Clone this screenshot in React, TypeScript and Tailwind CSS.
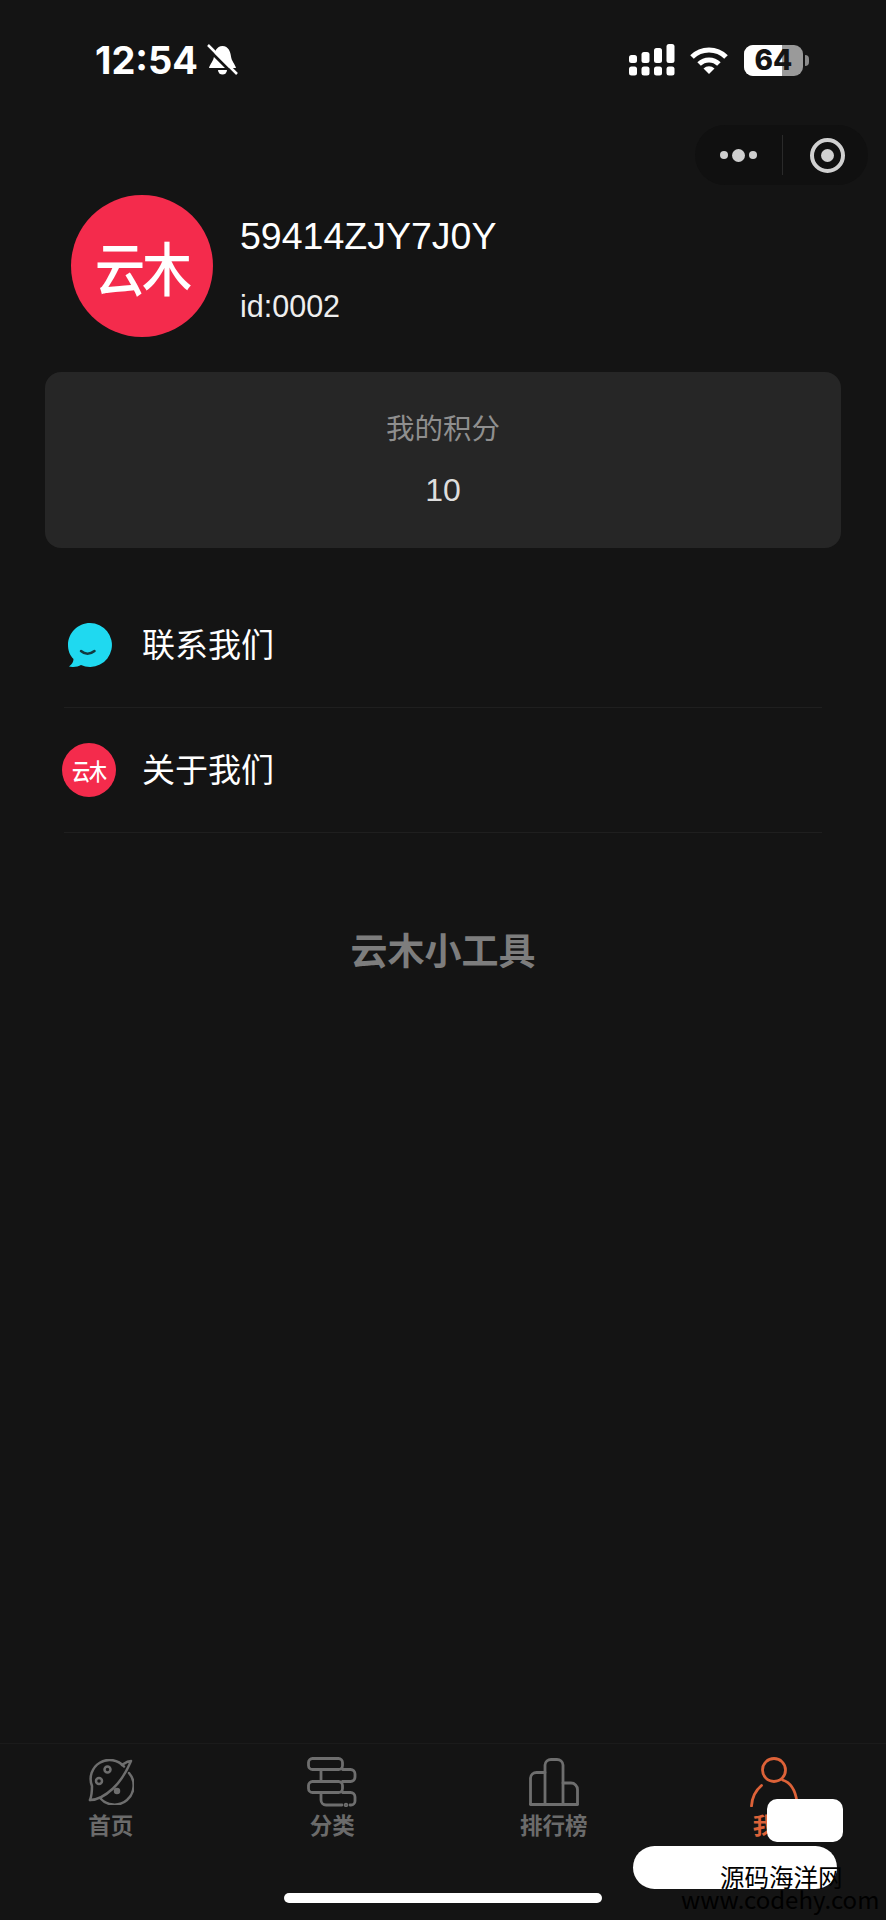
const sans = 'font-["Liberation_Sans","Noto_Sans_CJK_SC",sans-serif]';

function Signal() {
  return (
    <svg width="46" height="32" viewBox="0 0 46 32" fill="#fff">
      <rect x="0" y="11" width="8" height="8" rx="2.5" />
      <rect x="12.5" y="8" width="8" height="11" rx="2.5" />
      <rect x="25" y="4" width="8" height="15" rx="2.5" />
      <rect x="37.5" y="0" width="8" height="19" rx="2.5" />
      <rect x="0" y="22.5" width="8" height="9" rx="2.5" />
      <rect x="12.5" y="22.5" width="8" height="9" rx="2.5" />
      <rect x="25" y="22.5" width="8" height="9" rx="2.5" />
      <rect x="37.5" y="22.5" width="8" height="9" rx="2.5" />
    </svg>
  );
}

function Wifi() {
  return (
    <svg width="40" height="29" viewBox="0 0 40 29" fill="none" stroke="#fff" strokeWidth="5">
      <path d="M3 11 A24 24 0 0 1 37 11" />
      <path d="M10.1 18.1 A14 14 0 0 1 29.9 18.1" />
      <path d="M14.5 22.5 A8 8 0 0 1 25.5 22.5 L20 28 Z" fill="#fff" stroke="none" />
    </svg>
  );
}

function BellOff() {
  return (
    <svg width="31" height="32" viewBox="0 0 31 32">
      <path fill="#fff" d="M15.5 2C9.5 2 7.5 8 7 12.5 6.5 17 3 20 2 24L29 24C28 20 24.5 17 24 12.5 23.500 8 21.500 2 15.500 2Z" />
      <path fill="#fff" d="M11 26a4.500 4.500 0 0 0 9 0Z" />
      <path stroke="#141414" strokeWidth="3" d="M-1 3 27 31" />
      <path stroke="#fff" strokeWidth="2.500" d="M1 1 30 30" />
    </svg>
  );
}

function Battery() {
  return (
    <div className="flex items-center">
      <div className="relative w-[59px] h-[31px] rounded-[9px] overflow-hidden bg-[#9a9a9a]">
        <div className="w-[38px] h-full bg-white"></div>
        <div className="absolute inset-0 flex items-center justify-center text-[#141414] font-['Inter',sans-serif] font-extrabold text-[28px] leading-none">64</div>
      </div>
      <div className="w-[4px] h-[11px] ml-[2px] rounded-r-full bg-[#8a8a8a]"></div>
    </div>
  );
}

function Logo({ circle, text }: { circle: string; text: string }) {
  return (
    <div className={`flex items-center justify-center rounded-full bg-[#f42b4c] shrink-0 ${circle}`}>
      <span className={`text-white font-["Noto_Sans_CJK_SC",sans-serif] ${text}`}>云木</span>
    </div>
  );
}

function Bubble() {
  return (
    <svg width="46" height="44" viewBox="0 0 46 44">
      <path fill="#1fd9f0" d="M24 0a22 22 0 1 1-9 42.100C12 44 6 44.500 3 43.500 6 41 7.500 39 7.500 36 3.500 32 2 27 2 22 2 10 12 0 24 0Z" />
      <path fill="none" stroke="#123a40" strokeWidth="2.500" strokeLinecap="round" d="M15 28c4 3.500 9 3.500 13.500 0" />
    </svg>
  );
}

function HomeIcon() {
  return (
    <svg width="46" height="46" viewBox="0 0 46 46" fill="none" stroke="#6e6e6e" strokeWidth="2.500" strokeLinecap="round" strokeLinejoin="round">
      <path d="M36 7.500A19 19 0 0 0 4 27C4 32 4 36 2 41" />
      <path d="M41 14A19 19 0 0 1 12 39" />
      <path d="M2 41C10 41 17 37 25 29.500 33 22 38 14 43 2 39 2 37 4 34 6" />
      <circle cx="19.500" cy="10.500" r="3" />
      <circle cx="11" cy="22" r="3" />
      <circle cx="29" cy="32" r="2" fill="#6e6e6e" />
    </svg>
  );
}

function CategoryIcon() {
  return (
    <svg width="50" height="50" viewBox="0 0 50 50" fill="none" stroke="#6e6e6e" strokeWidth="2.800" strokeLinecap="round" strokeLinejoin="round">
      <rect x="1.500" y="1.500" width="34" height="11" rx="4" />
      <path d="M14 12.500V24M35.500 12.500H43.500A4.500 4.500 0 0 1 48 17V20A4.500 4.500 0 0 1 43.500 24.500H35.500" />
      <rect x="1.500" y="24.500" width="34" height="11" rx="4" />
      <path d="M14 35.500V43A5 5 0 0 0 19 48H35M35.500 35.500H43.500A4.500 4.500 0 0 1 48 40V44A4 4 0 0 1 44 48H43" />
      <circle cx="39" cy="48" r="0.800" fill="#6e6e6e" />
    </svg>
  );
}

function RankIcon() {
  return (
    <svg width="50" height="48" viewBox="0 0 50 48" fill="none" stroke="#6e6e6e" strokeWidth="2.800" strokeLinecap="round" strokeLinejoin="round">
      <path d="M1.500 46V20A6 6 0 0 1 7.500 14.500H16" />
      <path d="M16 46V7A6 6 0 0 1 22 1.500H28A6 6 0 0 1 34 7V46" />
      <path d="M34 25H42A6.500 6.500 0 0 1 48.500 31.500V46" />
      <path d="M1.500 46.500H48.500" />
    </svg>
  );
}

function MeIcon() {
  return (
    <svg width="50" height="50" viewBox="0 0 50 50" fill="none" stroke="#dd6238" strokeWidth="2.800" strokeLinecap="round">
      <circle cx="24" cy="13" r="11.500" />
      <path d="M1.500 49C2 41 5.500 33.500 11.500 28.500" />
      <path d="M32.500 23C41 25.500 45.500 34 47 45" />
    </svg>
  );
}

const tabs = [
  { label: '首页', icon: <HomeIcon /> },
  { label: '分类', icon: <CategoryIcon /> },
  { label: '排行榜', icon: <RankIcon /> },
  { label: '我的', icon: <MeIcon />, active: true },
];

const rows = [
  { label: '联系我们', icon: <Bubble /> },
  {
    label: '关于我们',
    icon: <Logo circle="w-[54px] h-[54px]" text="text-[18px] font-medium tracking-[-1px] leading-none scale-y-125" />,
  },
];

export default function App() {
  return (
    <div className={`relative h-[1920px] w-full overflow-hidden flex flex-col bg-[#141414] ${sans}`}>
      {/* status bar */}
      <div className="h-[125px] shrink-0 pt-[44px] pl-[95px] pr-[77px] flex items-start justify-between">
        <div className="flex items-center gap-[9px] h-[32px]">
          <span className="font-['Inter',sans-serif] font-bold text-[38px] leading-none text-white">12:54</span>
          <BellOff />
        </div>
        <div className="flex items-center">
          <Signal />
          <div className="ml-[14px] mr-[15px]">
            <Wifi />
          </div>
          <Battery />
        </div>
      </div>

      {/* capsule */}
      <div className="flex justify-end pr-[18px]">
        <div className="w-[173px] h-[60px] rounded-full bg-[#101010] flex items-center">
          <div className="w-[87px] flex items-center justify-center gap-[4px]">
            <span className="w-[8px] h-[8px] rounded-full bg-[#cfcfcf]"></span>
            <span className="w-[13px] h-[13px] rounded-full bg-[#cfcfcf]"></span>
            <span className="w-[8px] h-[8px] rounded-full bg-[#cfcfcf]"></span>
          </div>
          <div className="w-px h-[40px] bg-[#2a2a2a]"></div>
          <div className="flex-1 pl-[4px] flex items-center justify-center">
            <div className="w-[35px] h-[35px] rounded-full border-[4px] border-[#d0d0d0] flex items-center justify-center">
              <div className="w-[13px] h-[13px] rounded-full bg-[#d0d0d0]"></div>
            </div>
          </div>
        </div>
      </div>

      {/* profile */}
      <div className="mt-[10px] ml-[71px] flex gap-[27px]">
        <Logo circle="w-[142px] h-[142px]" text="text-[50px] font-medium leading-none tracking-[-3px] scale-y-[1.15]" />
        <div className="text-white">
          <div className="mt-[19px] text-[37.500px] leading-[44px] font-light">59414ZJY7J0Y</div>
          <div className="mt-[30px] text-[30.500px] leading-[36px] text-[#eeeeee]">id:0002</div>
        </div>
      </div>

      {/* points */}
      <div className="mt-[35px] mx-[45px] h-[176px] rounded-[16px] bg-[#262626] flex flex-col items-center">
        <div className="mt-[39px] text-[28.500px] leading-[36px] text-[#8f8f8f]">我的积分</div>
        <div className="mt-[23px] text-[32px] leading-[40px] text-[#dddddd]">10</div>
      </div>

      {/* menu */}
      <div className="mt-[35px] mx-[64px]">
        {rows.map((r) => (
          <div key={r.label} className="h-[125px] border-b border-[#1f1f1f] flex items-center">
            <div className="w-[54px] -ml-[2px] flex justify-center">{r.icon}</div>
            <span className="ml-[26px] pt-[2px] text-[33px] leading-[40px] text-white">{r.label}</span>
          </div>
        ))}
      </div>

      <div className="mt-[98px] text-center text-[37px] leading-[44px] font-bold text-[#7d7d7d]">云木小工具</div>

      {/* tab bar */}
      <div className="mt-auto h-[177px] border-t border-[#1b1b1b] flex flex-col">
        <div className="grid grid-cols-4 pt-[13px]">
          {tabs.map((t) => (
            <div key={t.label} className="flex flex-col items-center">
              <div className="h-[50px] flex items-center justify-center">{t.icon}</div>
              <div
                className={`mt-[6px] text-[22.500px] leading-[28px] font-bold ${
                  t.active ? 'text-[#dd6238]' : 'text-[#6b6b6b]'
                }`}
              >
                {t.label}
              </div>
            </div>
          ))}
        </div>
        <div className="mt-[52px] self-center w-[318px] h-[10px] rounded-full bg-white"></div>
      </div>

      {/* white scribbles and the watermark on top of the screenshot */}
      <div className="absolute left-[767px] top-[1799px] w-[76px] h-[43px] rounded-[10px] bg-white"></div>
      <div className="absolute left-[633px] top-[1846px] w-[204px] h-[43px] rounded-full bg-white"></div>
      <div className="absolute left-[720px] top-[1862px] text-[24.500px] leading-[30px] text-black font-['Noto_Sans_CJK_SC',sans-serif] whitespace-nowrap">源码海洋网</div>
      <div className="absolute left-[681px] top-[1883px] text-[24px] leading-[32px] text-black font-['Noto_Sans_CJK_SC',sans-serif] whitespace-nowrap">www.codehy.com</div>
    </div>
  );
}
